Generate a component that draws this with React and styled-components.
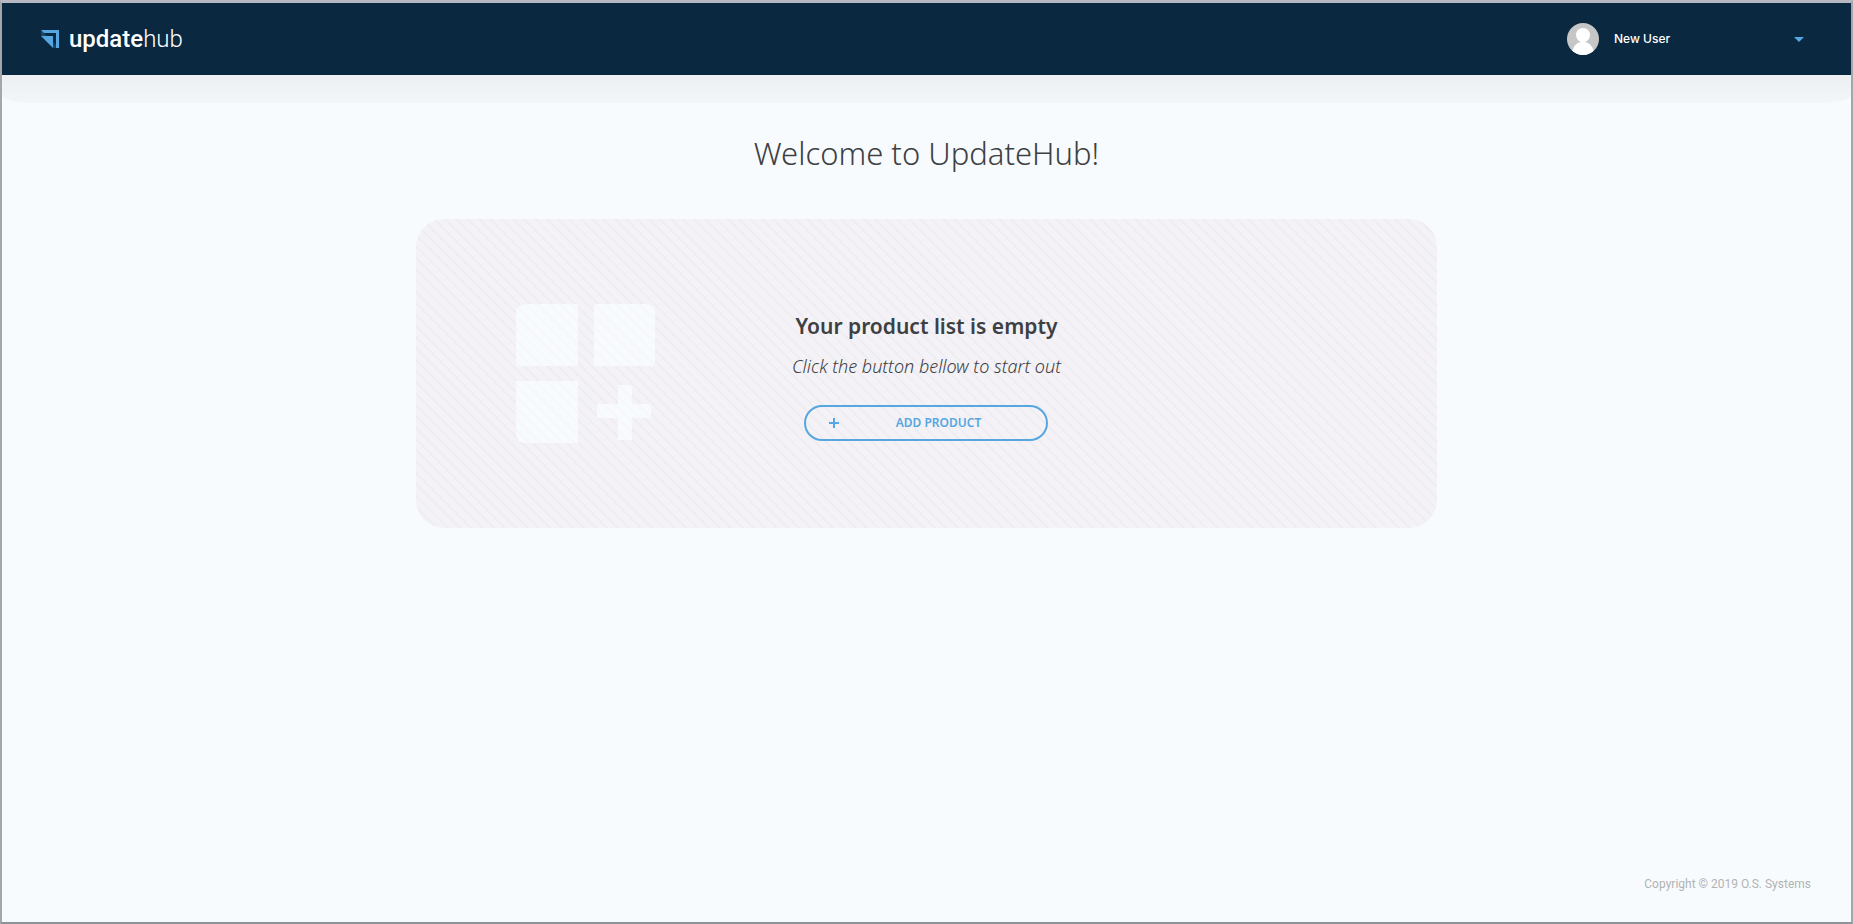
import React from "react";
import styled, { createGlobalStyle } from "styled-components";

const GlobalStyle = createGlobalStyle`
  *, *::before, *::after { box-sizing: border-box; }
  body {
    margin: 0;
    background: #f7fbfe;
    color: #3d4043;
    font-family: "Noto Sans", "Open Sans", sans-serif;
  }
`;

const Page = styled.div`
  display: flex;
  flex-direction: column;
  min-height: 100vh;
  border: 2px solid #a3a6aa;
  border-top: 3px solid #b6b9c1;
  border-bottom-color: #8e9398;
`;

const Header = styled.header`
  display: flex;
  align-items: center;
  justify-content: space-between;
  height: 72px;
  padding: 0 47px 0 39px;
  background: #0a2840;
  color: #fff;
`;

const HeaderShade = styled.div`
  height: 28px;
  border-radius: 0 0 32px 32px / 0 0 8px 8px;
  background: linear-gradient(#edeff2, #f0f3f6 50%, #f1f6f9);
`;

const Brand = styled.a`
  display: flex;
  align-items: center;
  gap: 10px;
  color: inherit;
  font-family: Roboto, sans-serif;
  font-size: 24px;
  font-weight: 500;
  line-height: 28px;
  text-decoration: none;
`;

const BrandLight = styled.span`
  font-weight: 300;
`;

const UserButton = styled.button`
  display: flex;
  align-items: center;
  gap: 15px;
  width: 237px;
  padding: 0;
  border: 0;
  background: none;
  color: inherit;
  font-family: Inter, sans-serif;
  font-size: 12px;
  font-weight: 500;
  line-height: 20px;
  text-align: left;
  cursor: pointer;
`;

const UserName = styled.span`
  flex: 1;
`;

const Main = styled.main`
  flex: 1;
  display: flex;
  flex-direction: column;
  align-items: center;
`;

const Title = styled.h1`
  margin: 29px 0 45px;
  font-size: 31px;
  font-weight: 300;
  line-height: 42px;
`;

const EmptyCard = styled.section`
  display: grid;
  grid-template-columns: 1fr auto 1fr;
  align-items: center;
  width: 100%;
  max-width: 1021px;
  min-height: 309px;
  padding: 0 100px;
  border-radius: 28px;
  background: repeating-linear-gradient(45deg, #f4f2f6 0 6px, #eeedf1 6px 8px);
`;

const Message = styled.div`
  display: flex;
  flex-direction: column;
  align-items: center;
  padding-top: 4px;
`;

const MessageTitle = styled.h2`
  margin: 0 0 12px;
  font-size: 21px;
  font-weight: 600;
  line-height: 30px;
`;

const Hint = styled.p`
  margin: 0 0 26px;
  font-size: 18px;
  font-style: italic;
  font-weight: 300;
  line-height: 26px;
`;

const AddButton = styled.button`
  display: grid;
  grid-template-columns: 24px 1fr;
  align-items: center;
  width: 244px;
  height: 36px;
  padding: 0 23px;
  border: 2px solid #56a7e1;
  border-radius: 18px;
  background: transparent;
  color: #56a7e1;
  font-family: inherit;
  font-size: 12px;
  font-weight: 600;
  line-height: 16px;
  text-transform: uppercase;
  cursor: pointer;
`;

const Footer = styled.footer`
  padding: 0 40px 29px;
  color: #b3b3b3;
  font-family: Roboto, sans-serif;
  font-size: 12px;
  line-height: 18px;
  text-align: right;
`;

const Logo = () => (
  <svg width="18" height="18" viewBox="0 0 18 18" aria-hidden="true">
    <path d="M0 0v6h6zM12 12v6h6z" fill="#1c4666" />
    <path d="M0 0h18v18h-3V3H3z" fill="#56a7e1" />
    <path d="M0 6h12v12z" fill="#56a7e1" />
  </svg>
);

const Avatar = () => (
  <svg width="32" height="32" viewBox="0 0 32 32" aria-hidden="true">
    <defs>
      <clipPath id="avatar-circle"><circle cx="16" cy="16" r="16" /></clipPath>
    </defs>
    <g clipPath="url(#avatar-circle)">
      <path d="M0 0h32v32H0z" fill="#c5c6c5" />
      <path d="M5 32c0-8 4-12 9-13-3-1-5-4-5-7 0-4 3-7 7-7s7 3 7 7c0 3-2 6-5 7 5 1 9 5 9 13z" fill="#fff" />
    </g>
  </svg>
);

const Caret = () => (
  <svg width="10" height="5" viewBox="0 0 10 5" aria-hidden="true">
    <path d="M0 0h10L5 5z" fill="#56a7e1" />
  </svg>
);

const ProductsIcon = () => (
  <svg width="139" height="139" viewBox="0 0 139 139" aria-hidden="true">
    <defs>
      <pattern id="stripes" width="8" height="8" patternUnits="userSpaceOnUse" patternTransform="rotate(-45)">
        <path d="M0 0h8v8H0z" fill="#f7fbfe" />
        <path d="M6 0h2v8H6z" fill="#f7f7fb" />
      </pattern>
    </defs>
    <path
      fill="url(#stripes)"
      d="M10 0H62V62H0V10Q0 0 10 0ZM78 0H129Q139 0 139 10V62H78ZM0 77H62V139H10Q0 139 0 129ZM102 81H116V100H135V114H116V136H102V114H81V100H102Z"
    />
  </svg>
);

const PlusIcon = () => (
  <svg width="10" height="10" viewBox="0 0 10 10" aria-hidden="true">
    <path d="M4 0h2v4h4v2H6v4H4V6H0V4h4z" fill="currentColor" />
  </svg>
);

export default function App() {
  return (
    <>
      <GlobalStyle />
      <Page>
        <Header>
          <Brand href="#">
            <Logo />
            <span>update<BrandLight>hub</BrandLight></span>
          </Brand>
          <UserButton type="button">
            <Avatar />
            <UserName>New User</UserName>
            <Caret />
          </UserButton>
        </Header>
        <HeaderShade />
        <Main>
          <Title>Welcome to UpdateHub!</Title>
          <EmptyCard>
            <ProductsIcon />
            <Message>
              <MessageTitle>Your product list is empty</MessageTitle>
              <Hint>Click the button bellow to start out</Hint>
              <AddButton type="button">
                <PlusIcon />
                <span>Add product</span>
              </AddButton>
            </Message>
          </EmptyCard>
        </Main>
        <Footer>Copyright © 2019 O.S. Systems</Footer>
      </Page>
    </>
  );
}
